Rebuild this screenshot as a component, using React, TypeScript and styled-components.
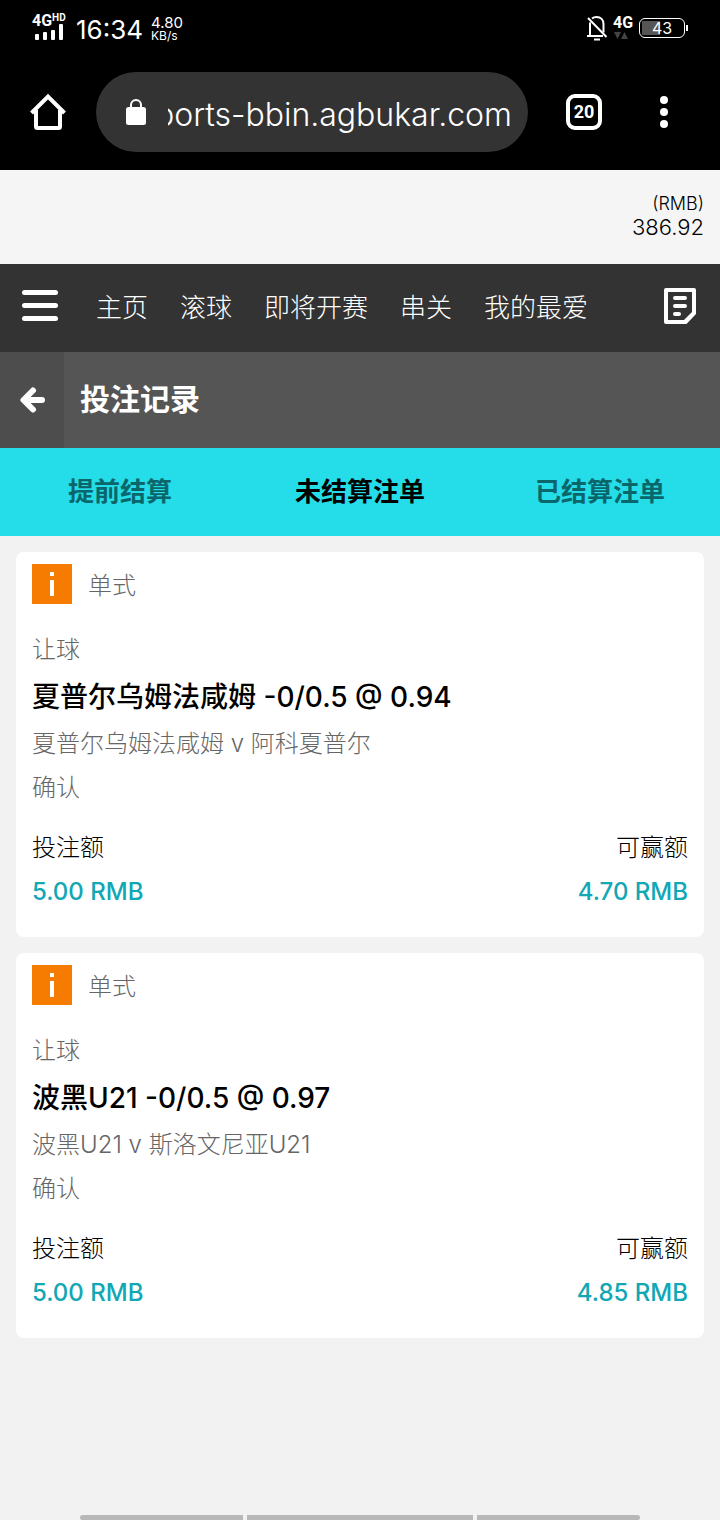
import React, { useState } from "react";
import styled, { createGlobalStyle } from "styled-components";

const GlobalStyle = createGlobalStyle`
  *, *::before, *::after { box-sizing: border-box; }
  body {
    margin: 0;
    background: #f2f2f2;
    font-family: Inter, "Noto Sans CJK SC", sans-serif;
    font-weight: 300;
    color: #000;
  }
  button, input { font: inherit; color: inherit; border: 0; padding: 0; margin: 0; background: none; }
  button { cursor: pointer; }
  a { color: inherit; text-decoration: none; }
  h1, h2, p, dl, dt, dd, ul { margin: 0; padding: 0; font-size: inherit; font-weight: inherit; }
  svg { display: block; flex: none; overflow: visible; }
`;

const Page = styled.div`
  display: flex;
  flex-direction: column;
  min-height: 100vh;
`;

/* ---------- phone status bar ---------- */

const StatusBar = styled.div`
  display: flex;
  justify-content: space-between;
  align-items: center;
  height: 56px;
  padding: 0 32px;
  background: #000;
  color: #fff;
`;

const StatusGroup = styled.div`
  display: flex;
  align-items: center;
  gap: 6px;
`;

const Signal = styled.div<{ $width: number }>`
  display: flex;
  flex-direction: column;
  align-items: flex-start;
  width: ${(p) => p.$width}px;
  padding-bottom: 2px;
`;

const Network = styled.span`
  display: flex;
  align-items: flex-start;
  font-family: Roboto, sans-serif;
  font-size: 16px;
  line-height: 14px;
  font-weight: 700;
`;

const NetworkMark = styled.span`
  font-size: 10px;
  line-height: 8px;
`;

const Clock = styled.time`
  padding: 4px 0 0 2px;
  font-size: 26px;
  line-height: 32px;
  font-weight: 400;
`;

const Speed = styled.span`
  display: flex;
  flex-direction: column;
  padding: 2px 0 0 2px;
  font-size: 15px;
  line-height: 14px;
  font-weight: 400;
`;

const SpeedUnit = styled.span`
  font-size: 12px;
  line-height: 12px;
`;

const Battery = styled.div`
  display: flex;
  align-items: center;
`;

const BatteryBody = styled.span`
  display: flex;
  align-items: center;
  justify-content: center;
  width: 46px;
  height: 20px;
  border: 1px solid #fff;
  border-radius: 6px;
  background: linear-gradient(#555, #555) 2px center / 18px 14px no-repeat;
  font-size: 16px;
  line-height: 18px;
  font-weight: 400;
`;

const BatteryTip = styled.span`
  width: 2px;
  height: 6px;
  margin-left: 1px;
  background: #fff;
`;

/* ---------- browser bar ---------- */

const BrowserBar = styled.div`
  display: flex;
  align-items: center;
  height: 114px;
  padding: 0 36px 2px 28px;
  background: #000;
  color: #fff;
`;

const IconButton = styled.button`
  display: flex;
  align-items: center;
  justify-content: center;
  width: 40px;
  height: 40px;
`;

const AddressBar = styled.label`
  display: flex;
  flex: 1;
  align-items: center;
  gap: 20px;
  min-width: 0;
  height: 80px;
  margin: 0 36px 0 28px;
  padding: 0 16px 0 28px;
  border-radius: 40px;
  background: #333;
`;

const AddressInput = styled.input`
  flex: 1;
  min-width: 0;
  height: 52px;
  padding-top: 4px;
  direction: rtl;
  outline: none;
  font-size: 32px;
`;

const TabCount = styled.span`
  display: flex;
  align-items: center;
  justify-content: center;
  width: 36px;
  height: 36px;
  border: 4px solid #fff;
  border-radius: 9px;
  font-family: Roboto, sans-serif;
  font-size: 18px;
  line-height: 24px;
  font-weight: 700;
`;

const MenuSlot = styled.div`
  margin-left: 40px;
`;

/* ---------- site header ---------- */

const Balance = styled.div`
  height: 94px;
  padding: 22px 16px 0;
  background: #f5f5f5;
  font-size: 18px;
  line-height: 24px;
  text-align: right;
`;

const BalanceAmount = styled.p`
  font-size: 22px;
  line-height: 22px;
`;

const NavBar = styled.nav`
  display: flex;
  align-items: center;
  height: 88px;
  padding: 0 20px 4px;
  background: #333;
  color: #fff;
`;

const NavLinks = styled.ul`
  display: flex;
  flex: 1;
  gap: 32px;
  margin-left: 36px;
  padding-top: 4px;
  list-style: none;
  font-size: 26px;
  line-height: 40px;
`;

const TitleBar = styled.header`
  display: flex;
  height: 96px;
  background: #555;
  color: #fff;
`;

const BackButton = styled.button`
  display: flex;
  align-items: center;
  justify-content: center;
  width: 64px;
  background: #4d4d4d;
`;

const Title = styled.h1`
  padding-left: 16px;
  font-size: 30px;
  line-height: 94px;
  font-weight: 700;
`;

const Tabs = styled.div`
  display: grid;
  grid-template-columns: repeat(3, 1fr);
  height: 88px;
  background: #24dde8;
`;

const Tab = styled.button<{ $active: boolean }>`
  font-size: 26px;
  line-height: 40px;
  font-weight: 600;
  color: ${(p) => (p.$active ? "#000" : "#0b666b")};
`;

/* ---------- bets ---------- */

const BetList = styled.main`
  display: flex;
  flex-direction: column;
  gap: 16px;
  padding: 16px;
`;

const Card = styled.article`
  padding: 12px 16px 23px;
  border-radius: 8px;
  background: #fff;
  font-size: 24px;
  line-height: 44px;
`;

const CardHeader = styled.div`
  display: flex;
  align-items: flex-end;
  gap: 16px;
  height: 40px;
  margin-bottom: 24px;
  line-height: 36px;
  color: #666;
`;

const Muted = styled.p`
  color: #666;
`;

const Pick = styled.h2`
  font-size: 28px;
  line-height: 50px;
  font-weight: 500;
`;

const Amounts = styled.dl`
  display: flex;
  justify-content: space-between;
  margin-top: 16px;
`;

const Amount = styled.div<{ $end?: boolean }>`
  text-align: ${(p) => (p.$end ? "right" : "left")};
`;

const AmountValue = styled.dd`
  font-weight: 500;
  color: #11a7b4;
`;

const GestureBar = styled.div`
  display: grid;
  grid-template-columns: 163fr 226fr 163fr;
  gap: 4px;
  height: 5px;
  margin: auto 80px 0;
  border-radius: 3px;
  overflow: hidden;
`;

const GestureSegment = styled.span`
  background: #b8b8b8;
`;

/* ---------- icons ---------- */

const SignalBars = () => (
  <svg width="32" height="12" viewBox="0 0 32 12" fill="#fff" aria-hidden="true">
    <rect x="3" y="6" width="4" height="6" rx="1" />
    <rect x="11" y="4" width="4" height="8" rx="1" />
    <rect x="19" y="2" width="4" height="10" rx="1" />
    <rect x="27" y="-4" width="4" height="16" rx="1" />
  </svg>
);

const BellOffIcon = () => (
  <svg width="22" height="26" viewBox="0 0 22 26" fill="none" stroke="#fff" strokeWidth="2" aria-hidden="true">
    <path d="M7 3.600C8.200 2.500 9.500 2 11.500 2c4.200 0 7 2.800 7 7v8.500M5 7.500V20M2 21h16" />
    <path d="M3 3l18.500 19" />
    <path d="M9 24.500h6" />
  </svg>
);

const DataArrows = () => (
  <svg width="16" height="9" viewBox="0 0 16 9" fill="#444" aria-hidden="true">
    <path d="M1 2h7L4.500 9zM8 9h7L11.500 2z" />
  </svg>
);

const HomeIcon = () => (
  <svg width="36" height="38" viewBox="0 0 36 38" fill="none" stroke="#fff" strokeWidth="4" aria-hidden="true">
    <path d="M1.500 20L18 3.500 34.500 20" />
    <path d="M6 17v16.500a1.500 1.500 0 0 0 1.500 1.500h21a1.500 1.500 0 0 0 1.500-1.500V17" />
  </svg>
);

const LockIcon = () => (
  <svg width="24" height="28" viewBox="0 0 24 28" aria-hidden="true">
    <rect x="2" y="9" width="20" height="18" rx="2.500" fill="#fff" />
    <path d="M7 10V7a5 5 0 0 1 10 0v3" fill="none" stroke="#fff" strokeWidth="2" />
  </svg>
);

const DotsIcon = () => (
  <svg width="8" height="32" viewBox="0 0 8 32" fill="#fff" aria-hidden="true">
    <circle cx="4" cy="4" r="4" />
    <circle cx="4" cy="16" r="4" />
    <circle cx="4" cy="28" r="4" />
  </svg>
);

const MenuIcon = () => (
  <svg width="36" height="32" viewBox="0 0 36 32" fill="#fff" aria-hidden="true">
    <rect x="0" y="0" width="36" height="5" rx="2.500" />
    <rect x="0" y="13" width="36" height="5" rx="2.500" />
    <rect x="0" y="26" width="36" height="5" rx="2.500" />
  </svg>
);

const SlipIcon = () => (
  <svg width="32" height="36" viewBox="0 0 32 36" aria-hidden="true">
    <path
      fill="#fff"
      fillRule="evenodd"
      d="M2 0h28a2 2 0 0 1 2 2v24L22.500 36H2a2 2 0 0 1-2-2V2a2 2 0 0 1 2-2zm2 4v28h16l8-8V4z"
    />
    <path d="M11 10h10M11 18h10M11 26h4" stroke="#fff" strokeWidth="4" strokeLinecap="round" />
  </svg>
);

const BackIcon = () => (
  <svg width="28" height="28" viewBox="0 0 28 28" fill="none" stroke="#fff" strokeWidth="6" strokeLinecap="round" strokeLinejoin="round" aria-hidden="true">
    <path d="M15 4.500L5.500 14 15 23.500M7 14h17" />
  </svg>
);

const InfoIcon = () => (
  <svg width="40" height="40" viewBox="0 0 40 40" aria-hidden="true">
    <rect width="40" height="40" fill="#f57c00" />
    <path d="M18 8h4v4h-4zM18 16h4v16h-4z" fill="#fff" />
  </svg>
);

/* ---------- data ---------- */

const navItems = ["主页", "滚球", "即将开赛", "串关", "我的最爱"];
const tabs = ["提前结算", "未结算注单", "已结算注单"];

interface Bet {
  pick: string;
  match: string;
  stake: string;
  win: string;
}

const bets: Bet[] = [
  {
    pick: "夏普尔乌姆法咸姆 -0/0.5 @ 0.94",
    match: "夏普尔乌姆法咸姆 v 阿科夏普尔",
    stake: "5.00 RMB",
    win: "4.70 RMB",
  },
  {
    pick: "波黑U21 -0/0.5 @ 0.97",
    match: "波黑U21 v 斯洛文尼亚U21",
    stake: "5.00 RMB",
    win: "4.85 RMB",
  },
];

const BetCard = ({ bet }: { bet: Bet }) => (
  <Card>
    <CardHeader>
      <InfoIcon />
      <span>单式</span>
    </CardHeader>
    <Muted>让球</Muted>
    <Pick>{bet.pick}</Pick>
    <Muted>{bet.match}</Muted>
    <Muted>确认</Muted>
    <Amounts>
      <Amount>
        <dt>投注额</dt>
        <AmountValue>{bet.stake}</AmountValue>
      </Amount>
      <Amount $end>
        <dt>可赢额</dt>
        <AmountValue>{bet.win}</AmountValue>
      </Amount>
    </Amounts>
  </Card>
);

export default function App() {
  const [active, setActive] = useState(1);

  return (
    <Page lang="zh-CN">
      <GlobalStyle />
      <StatusBar>
        <StatusGroup>
          <Signal $width={36}>
            <Network>
              4G<NetworkMark>HD</NetworkMark>
            </Network>
            <SignalBars />
          </Signal>
          <Clock>16:34</Clock>
          <Speed>
            <span>4.80</span>
            <SpeedUnit>KB/s</SpeedUnit>
          </Speed>
        </StatusGroup>
        <StatusGroup>
          <BellOffIcon />
          <Signal $width={20}>
            <Network>4G</Network>
            <DataArrows />
          </Signal>
          <Battery>
            <BatteryBody>43</BatteryBody>
            <BatteryTip />
          </Battery>
        </StatusGroup>
      </StatusBar>

      <BrowserBar>
        <IconButton aria-label="主页">
          <HomeIcon />
        </IconButton>
        <AddressBar>
          <LockIcon />
          <AddressInput type="text" aria-label="网址" defaultValue="sports-bbin.agbukar.com" />
        </AddressBar>
        <IconButton aria-label="标签页">
          <TabCount>20</TabCount>
        </IconButton>
        <MenuSlot>
          <IconButton aria-label="更多">
            <DotsIcon />
          </IconButton>
        </MenuSlot>
      </BrowserBar>

      <Balance>
        <p>(RMB)</p>
        <BalanceAmount>386.92</BalanceAmount>
      </Balance>

      <NavBar>
        <IconButton aria-label="菜单">
          <MenuIcon />
        </IconButton>
        <NavLinks>
          {navItems.map((item) => (
            <li key={item}>
              <a href="#">{item}</a>
            </li>
          ))}
        </NavLinks>
        <IconButton aria-label="注单">
          <SlipIcon />
        </IconButton>
      </NavBar>

      <TitleBar>
        <BackButton aria-label="返回">
          <BackIcon />
        </BackButton>
        <Title>投注记录</Title>
      </TitleBar>

      <Tabs role="tablist">
        {tabs.map((tab, i) => (
          <Tab key={tab} role="tab" aria-selected={i === active} $active={i === active} onClick={() => setActive(i)}>
            {tab}
          </Tab>
        ))}
      </Tabs>

      <BetList>
        {bets.map((bet) => (
          <BetCard key={bet.pick} bet={bet} />
        ))}
      </BetList>

      <GestureBar>
        <GestureSegment />
        <GestureSegment />
        <GestureSegment />
      </GestureBar>
    </Page>
  );
}
